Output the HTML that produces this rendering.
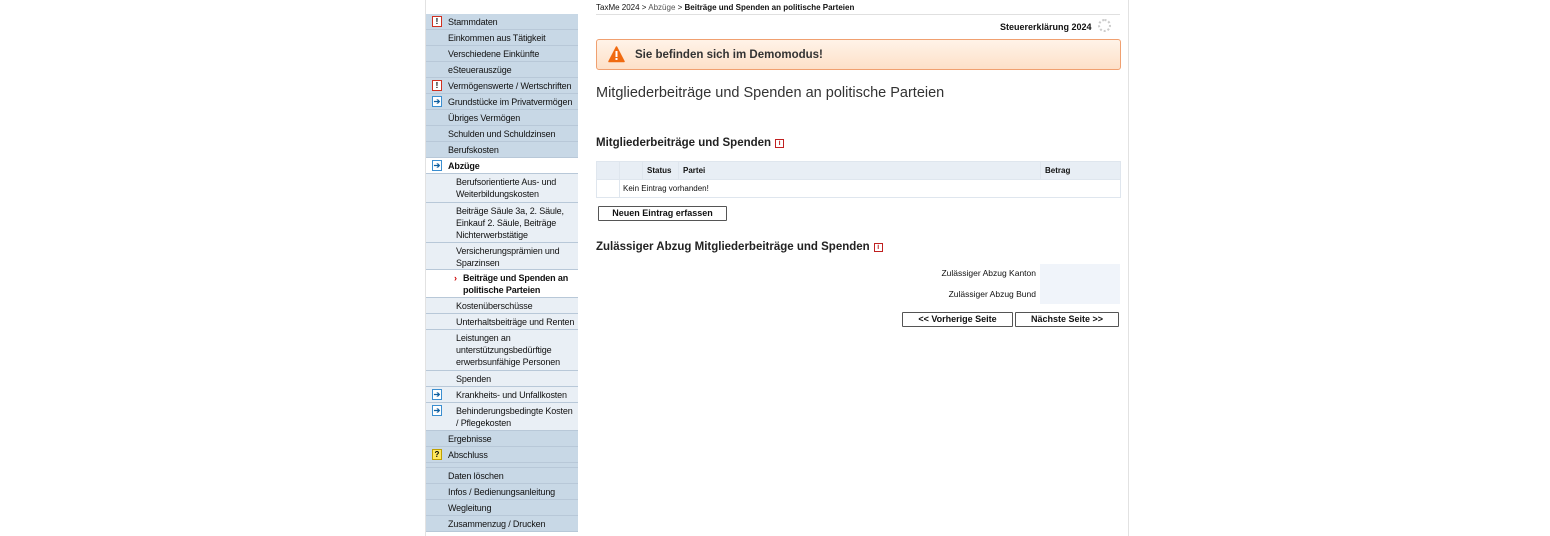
<!DOCTYPE html>
<html><head><meta charset="utf-8"><style>
*{margin:0;padding:0;box-sizing:border-box}
body{width:1550px;height:536px;background:#fff;font-family:"Liberation Sans",Arial,sans-serif;position:relative;overflow:hidden;color:#111}
.vl{position:absolute;top:0;width:1px;height:536px;background:#e2e2e2}
.r{position:absolute;left:426px;width:152px;font-size:9px;letter-spacing:-0.15px;line-height:12px;border-bottom:1px solid #b8c8d8;color:#111}
.n{white-space:nowrap}
.t{background:#c8d8e6;padding:2px 0 0 22px}
.s{background:#e9eff5;padding:2px 2px 0 30px}
.w{background:#fff}
.ic{position:absolute;left:6px;top:2px;width:10px;height:11px;border:1px solid;font-size:8px;line-height:9px;text-align:center;font-weight:bold;letter-spacing:0}
.ex{border-color:#d03020;background:#fff;color:#000}
.ar{border-color:#3a8ed0;background:#fff;color:#1060a0}
.q{border-color:#c0a000;background:#ffe860;color:#000}
.a{position:absolute;font-size:9px}
.b{font-weight:bold}
.info{display:inline-block;width:9px;height:9px;border:1px solid #c02020;color:#c02020;font-size:7px;line-height:7px;text-align:center;vertical-align:1px;margin-left:4px;font-weight:bold}
.btn{position:absolute;border:1px solid #555;background:#fff;font-size:9px;font-weight:bold;text-align:center;line-height:13px;height:15px;border-radius:1px}
td{border-right:1px solid #dfe6ee;font-size:8px;height:18px;padding-left:4px}
</style></head><body>
<div class="vl" style="left:425px"></div>
<div class="vl" style="left:1128px"></div>

<div class="r t n" style="top:14px;height:16px"><span class="ic ex">!</span>Stammdaten</div>
<div class="r t n" style="top:30px;height:16px">Einkommen aus Tätigkeit</div>
<div class="r t n" style="top:46px;height:16px">Verschiedene Einkünfte</div>
<div class="r t n" style="top:62px;height:16px">eSteuerauszüge</div>
<div class="r t n" style="top:78px;height:16px"><span class="ic ex">!</span>Vermögenswerte / Wertschriften</div>
<div class="r t n" style="top:94px;height:16px"><span class="ic ar">➔</span>Grundstücke im Privatvermögen</div>
<div class="r t n" style="top:110px;height:16px">Übriges Vermögen</div>
<div class="r t n" style="top:126px;height:16px">Schulden und Schuldzinsen</div>
<div class="r t n" style="top:142px;height:16px">Berufskosten</div>
<div class="r t w b n" style="top:158px;height:16px"><span class="ic ar">➔</span>Abzüge</div>
<div class="r s" style="top:174px;height:29px">Berufsorientierte Aus- und Weiterbildungskosten</div>
<div class="r s" style="top:203px;height:40px">Beiträge Säule 3a, 2. Säule, Einkauf 2. Säule, Beiträge Nichterwerbstätige</div>
<div class="r s" style="top:243px;height:27px">Versicherungsprämien und Sparzinsen</div>
<div class="r s w b" style="top:270px;height:28px;padding-left:37px"><span style="position:absolute;left:28px;color:#c00">›</span>Beiträge und Spenden an politische Parteien</div>
<div class="r s n" style="top:298px;height:16px">Kostenüberschüsse</div>
<div class="r s n" style="top:314px;height:16px">Unterhaltsbeiträge und Renten</div>
<div class="r s" style="top:330px;height:41px">Leistungen an unterstützungsbedürftige erwerbsunfähige Personen</div>
<div class="r s n" style="top:371px;height:16px">Spenden</div>
<div class="r s n" style="top:387px;height:16px"><span class="ic ar">➔</span>Krankheits- und Unfallkosten</div>
<div class="r s" style="top:403px;height:28px;padding-right:0"><span class="ic ar">➔</span><span class="n">Behinderungsbedingte Kosten</span><br>/ Pflegekosten</div>
<div class="r t n" style="top:431px;height:16px">Ergebnisse</div>
<div class="r t n" style="top:447px;height:16px"><span class="ic q">?</span>Abschluss</div>
<div class="r t" style="top:463px;height:5px;padding:0"></div>
<div class="r t n" style="top:468px;height:16px">Daten löschen</div>
<div class="r t n" style="top:484px;height:16px">Infos / Bedienungsanleitung</div>
<div class="r t n" style="top:500px;height:16px">Wegleitung</div>
<div class="r t n" style="top:516px;height:16px">Zusammenzug / Drucken</div>

<div class="a" style="left:596px;top:3px;font-size:8px">TaxMe 2024 &gt; <span style="color:#555">Abzüge</span> &gt; <b>Beiträge und Spenden an politische Parteien</b></div>
<div style="position:absolute;left:596px;top:14px;width:524px;height:1px;background:#e0e0e0"></div>
<div class="a b" style="left:1000px;top:22px;font-size:9px">Steuererklärung 2024</div>
<div class="a" style="left:1098px;top:19px;width:13px;height:13px;border:2px dotted #ccc;border-radius:50%"></div>

<div style="position:absolute;left:596px;top:39px;width:525px;height:31px;border:1px solid #f0a070;border-radius:3px;background:linear-gradient(#fff3e8,#fde0c8)">
<svg style="position:absolute;left:11px;top:6px" width="17" height="17" viewBox="0 0 17 17"><path d="M8.5 1 L16 15.5 H1 Z" fill="#f06a10" stroke="#f06a10" stroke-linejoin="round" stroke-width="1.5"/><rect x="7.5" y="5" width="2" height="6" fill="#fff"/><rect x="7.5" y="12" width="2" height="2" fill="#fff"/></svg>
<div style="position:absolute;left:38px;top:9px;font-size:11.5px;font-weight:bold;color:#333">Sie befinden sich im Demomodus!</div></div>

<div class="a" style="left:596px;top:85px;font-size:14.5px;color:#333">Mitgliederbeiträge und Spenden an politische Parteien</div>
<div class="a b" style="left:596px;top:137px;font-size:11.5px;color:#222">Mitgliederbeiträge und Spenden<span class="info">i</span></div>

<table style="position:absolute;left:596px;top:161px;width:525px;border-collapse:collapse;border:1px solid #dfe6ee">
<tr style="background:#e8eef5"><td style="width:23px"></td><td style="width:23px"></td><td style="width:36px" class="b">Status</td><td style="width:362px" class="b">Partei</td><td class="b" style="border-right:0">Betrag</td></tr>
<tr style="border-top:1px solid #dfe6ee"><td></td><td colspan="4" style="border-right:0;padding-left:3px">Kein Eintrag vorhanden!</td></tr>
</table>
<div class="btn" style="left:598px;top:206px;width:129px">Neuen Eintrag erfassen</div>

<div class="a b" style="left:596px;top:241px;font-size:11.5px;color:#222">Zulässiger Abzug Mitgliederbeiträge und Spenden<span class="info">i</span></div>
<div style="position:absolute;left:1040px;top:264px;width:80px;height:40px;background:#f0f4fa"></div>
<div class="a" style="left:920px;top:268px;width:116px;text-align:right;font-size:8.5px">Zulässiger Abzug Kanton</div>
<div class="a" style="left:920px;top:289px;width:116px;text-align:right;font-size:8.5px">Zulässiger Abzug Bund</div>
<div class="btn" style="left:902px;top:312px;width:111px">&lt;&lt; Vorherige Seite</div>
<div class="btn" style="left:1015px;top:312px;width:104px">Nächste Seite &gt;&gt;</div>
</body></html>
